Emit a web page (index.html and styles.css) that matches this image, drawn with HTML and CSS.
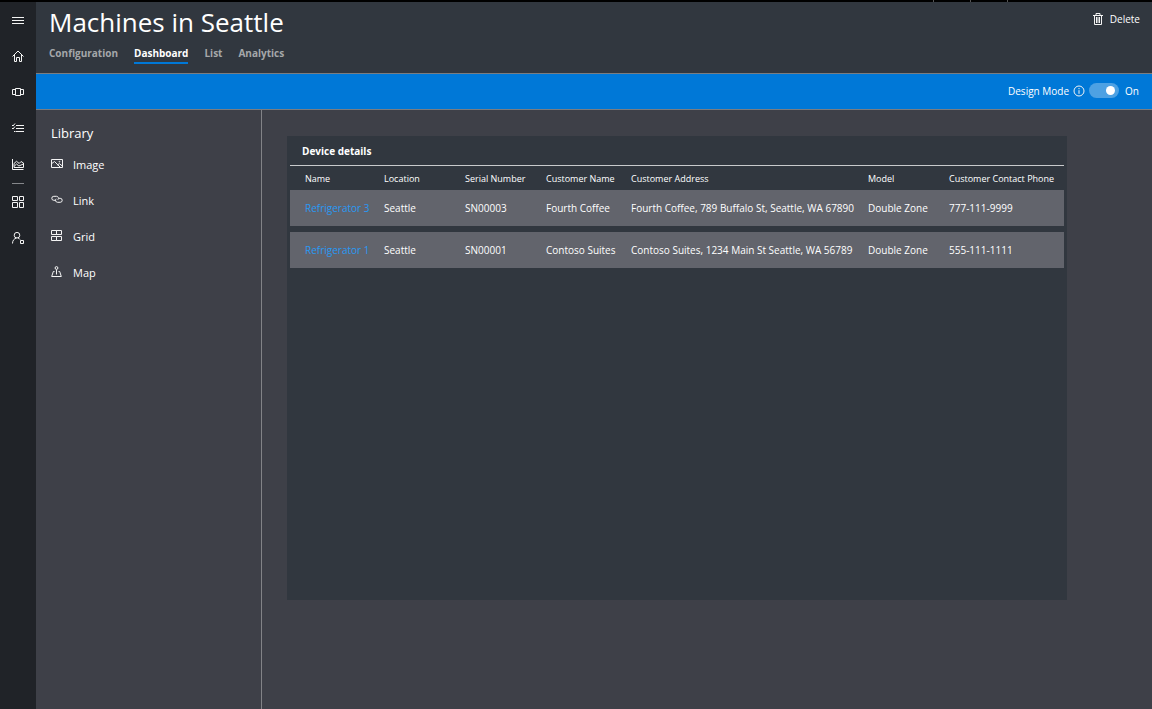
FILE: index.html
```html
<!DOCTYPE html>
<html lang="en">
<head>
<meta charset="utf-8">
<title>Machines in Seattle</title>
<link rel="stylesheet" href="styles.css">
</head>
<body>
<div class="topline"><span class="tick"></span><span class="tick"></span><span class="tick"></span></div>
<div class="shell">
  <nav class="rail" aria-label="Main">
    <button class="rail-button" aria-label="Menu"><svg class="icon" viewBox="0 0 14 14"><path d="M1 4.500h12M1 7.500h12M1 10.500h12"/></svg></button>
    <button class="rail-button" aria-label="Home"><svg class="icon" viewBox="0 0 14 14"><path d="M1.500 7.500 7 2l5.500 5.500M3.500 6v6.500h2V8.500h3v4h2V6"/></svg></button>
    <button class="rail-button" aria-label="Devices"><svg class="icon" viewBox="0 0 14 14"><path d="M4.500 3.500h5v7h-5zM4.500 4.500h-3v5h3M9.500 4.500h3v5h-3"/></svg></button>
    <button class="rail-button" aria-label="Tasks"><svg class="icon" viewBox="0 0 14 14"><path d="M5 4.500h8M5 7.500h8M5 10.500h8M1 4l1 1 2-2.500M1 7l1 1 2-2.500M3 10.500h1.500"/></svg></button>
    <button class="rail-button" aria-label="Analytics"><svg class="icon" viewBox="0 0 14 14"><path d="M1.500 2v10.500h11M3 10.500h9.500V6L10 4.500 8.200 6.500 5.500 4.300 3 6.500zM3.200 9.300l2.300-2.300 2.400 2 4.400-2"/></svg></button>
    <hr class="rail-rule">
    <button class="rail-button" aria-label="Applications"><svg class="icon" viewBox="0 0 14 14"><path d="M1.500 1.500h5v4h-5zM8.500 1.500h4v4h-4zM1.500 7.500h5v5h-5zM8.500 7.500h4v5h-4z"/></svg></button>
    <button class="rail-button" aria-label="Administration"><svg class="icon" viewBox="0 0 14 14"><circle cx="6" cy="4.200" r="2.800"/><path d="M1.500 12.500c0-3 1.700-5 4-5.500M7 7c1 .3 1.600.8 2 1.500M9.500 9.500h3v3h-3z"/></svg></button>
  </nav>
  <div class="page">
    <header class="header">
      <div class="heading">
        <h1 class="title">Machines in Seattle</h1>
        <nav class="tabs" aria-label="Views">
          <a class="tab" href="#configuration">Configuration</a>
          <a class="tab tab-active" href="#dashboard" aria-current="page">Dashboard</a>
          <a class="tab" href="#list">List</a>
          <a class="tab" href="#analytics">Analytics</a>
        </nav>
      </div>
      <button class="delete"><svg class="icon" viewBox="0 0 14 14"><path d="M2 3.500h10M5 3.500v-2h4v2M3.500 3.500v9h7v-9M5.500 5v6M7 5v6M8.500 5v6"/></svg>Delete</button>
    </header>
    <div class="modebar">
      <label for="design">Design Mode</label>
      <svg class="info" viewBox="0 0 12 12"><circle cx="6" cy="6" r="5"/><path d="M6 5.200v3.600M6 3v1.200"/></svg>
      <input class="toggle" id="design" type="checkbox" role="switch" checked>
      <span class="mode-state">On</span>
    </div>
    <div class="workspace">
      <aside class="library">
        <h2 class="library-title">Library</h2>
        <button class="tile"><svg class="tile-icon" viewBox="0 0 12 12"><path d="M.5 1.500h11v8H.5zM.8 5.500l2.700-2L9 9M6.500 7l1.800-1.500 3 2.500"/><circle cx="8.500" cy="3.700" r=".4"/></svg>Image</button>
        <button class="tile"><svg class="tile-icon" viewBox="0 0 12 12"><path d="M4 6.300H2.800a2 2 0 0 1 0-4h2.700a2 2 0 0 1 1.300 3.500M8 4.300h1.200a2 2 0 0 1 0 4H6.500a2 2 0 0 1-1.300-3.500"/></svg>Link</button>
        <button class="tile"><svg class="tile-icon" viewBox="0 0 12 12"><path d="M.5.500h5v4h-5zM5.500.500h5v4h-5zM.5 6.500h5v4h-5zM5.500 6.500h5v4h-5z"/></svg>Grid</button>
        <button class="tile"><svg class="tile-icon" viewBox="0 0 12 12"><circle cx="5.500" cy="2" r="1.400"/><path d="M5.500 3.500v5M3.500 5.500H2.300L.7 10.500h9.600L8.700 5.500H7.500"/></svg>Map</button>
      </aside>
      <main class="canvas">
        <section class="card">
          <h2 class="card-title">Device details</h2>
          <table class="devices">
            <colgroup><col class="col-name"><col class="col-short"><col class="col-short"><col class="col-customer"><col class="col-address"><col class="col-short"><col></colgroup>
            <thead><tr><th>Name</th><th>Location</th><th>Serial Number</th><th>Customer Name</th><th>Customer Address</th><th>Model</th><th>Customer Contact Phone</th></tr></thead>
            <tbody>
              <tr><td><a href="#refrigerator-3">Refrigerator 3</a></td><td>Seattle</td><td>SN00003</td><td>Fourth Coffee</td><td>Fourth Coffee, 789 Buffalo St, Seattle, WA 67890</td><td>Double Zone</td><td>777-111-9999</td></tr>
              <tr><td><a href="#refrigerator-1">Refrigerator 1</a></td><td>Seattle</td><td>SN00001</td><td>Contoso Suites</td><td>Contoso Suites, 1234 Main St Seattle, WA 56789</td><td>Double Zone</td><td>555-111-1111</td></tr>
            </tbody>
          </table>
        </section>
      </main>
    </div>
  </div>
</div>
</body>
</html>
```
FILE: styles.css
```css
* { box-sizing: border-box; }
body {
  margin: 0;
  min-height: 100vh;
  display: flex;
  flex-direction: column;
  background: #3e4048;
  color: #fff;
  font: 10px/16px "Open Sans", "Noto Sans", sans-serif;
}
button { margin: 0; padding: 0; border: 0; background: none; color: inherit; font: inherit; cursor: pointer; }
a { color: inherit; text-decoration: none; }
h1, h2 { margin: 0; font-weight: 400; }
svg { flex: none; fill: none; stroke: #f4f4f4; stroke-width: 1; }
.topline { height: 2px; background: #000; display: flex; justify-content: flex-end; gap: 36px; padding-right: 144px; }
.tick { width: 1px; background: #555; }
.shell { flex: 1; display: flex; }
.rail { width: 36px; flex: none; background: #202328; }
.rail-button { width: 36px; height: 36px; display: flex; align-items: center; justify-content: center; }
.icon { width: 14px; height: 14px; }
.rail-rule { width: 12px; height: 1px; margin: 1px auto 0; border: 0; background: #85878b; }
.page { flex: 1; min-width: 0; display: flex; flex-direction: column; }
.header { display: flex; justify-content: space-between; align-items: flex-start; background: #31373f; border-bottom: 1px solid #7b7d80; padding: 2px 12px 9px 13px; }
.title { font-size: 26px; line-height: 36px; }
.tabs { display: flex; gap: 16px; padding-top: 4px; }
.tab { color: #a5a7aa; font-weight: 700; line-height: 18px; border-bottom: 2px solid transparent; }
.tab-active { color: #fff; border-color: #0078d7; }
.delete { display: flex; align-items: center; gap: 5px; padding-top: 7px; }
.modebar { height: 36px; display: flex; align-items: center; justify-content: flex-end; gap: 4px; padding: 0 13px 2px 0; background: #0078d7; border-bottom: 1px solid #7b7d80; }
.info { width: 12px; height: 12px; }
.toggle { appearance: none; width: 30px; height: 15px; margin: 0; border-radius: 8px; background: #4da1e3; display: flex; align-items: center; justify-content: flex-end; padding-right: 4px; }
.toggle::before { content: ""; width: 9px; height: 9px; border-radius: 50%; background: #fff; }
.toggle:not(:checked) { justify-content: flex-start; padding-left: 4px; }
.mode-state { padding-left: 2px; }
.workspace { flex: 1; display: flex; }
.library { width: 226px; flex: none; padding: 14px 15px; border-right: 1px solid #828387; }
.library-title { font-size: 13px; line-height: 18px; margin-bottom: 5px; }
.tile { width: 100%; height: 36px; display: flex; align-items: center; gap: 10px; font-size: 11px; text-align: left; }
.tile-icon { width: 12px; height: 12px; margin-bottom: 2px; }
.canvas { flex: 1; min-width: 0; display: flex; padding: 26px 85px 109px 25px; }
.card { flex: 1; min-width: 0; padding: 0 3px; background: #31373f; }
.card-title { padding: 7px 12px 6px; font-size: 10px; line-height: 16px; font-weight: 700; border-bottom: 1px solid #c8cacc; }
.devices { width: 100%; table-layout: fixed; border-collapse: separate; border-spacing: 0 6px; font-size: 10px; white-space: nowrap; }
.devices th { padding: 1px 0 0 15px; font-size: 9px; line-height: 11px; font-weight: 400; text-align: left; }
.devices td { height: 36px; padding: 0 0 0 15px; background: #62646c; }
.devices a { color: #2899f5; }
.col-name { width: 79px; }
.col-short { width: 81px; }
.col-customer { width: 85px; }
.col-address { width: 237px; }
```
